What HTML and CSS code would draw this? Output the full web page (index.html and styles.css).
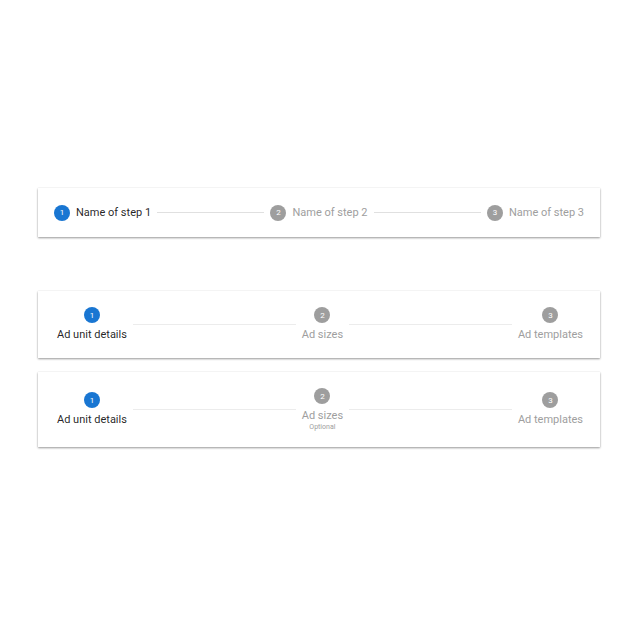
FILE: index.html
```html
<!DOCTYPE html>
<html lang="en">
<head>
  <meta charset="UTF-8">
  <meta name="viewport" content="width=device-width, initial-scale=1.0">
  <title>Steppers</title>
  <link rel="stylesheet" href="styles.css">
</head>
<body>
  <main>
    <div class="stepper horizontal">
      <div class="step active">
        <span class="num">1</span>
        <span class="label">Name of step 1</span>
      </div>
      <div class="line"></div>
      <div class="step">
        <span class="num">2</span>
        <span class="label">Name of step 2</span>
      </div>
      <div class="line"></div>
      <div class="step">
        <span class="num">3</span>
        <span class="label">Name of step 3</span>
      </div>
    </div>

    <div class="stepper stacked first">
      <div class="step active">
        <span class="num">1</span>
        <span class="label">Ad unit details</span>
      </div>
      <div class="line"></div>
      <div class="step">
        <span class="num">2</span>
        <span class="label">Ad sizes</span>
      </div>
      <div class="line"></div>
      <div class="step">
        <span class="num">3</span>
        <span class="label">Ad templates</span>
      </div>
    </div>

    <div class="stepper stacked">
      <div class="step active">
        <span class="num">1</span>
        <span class="label">Ad unit details</span>
      </div>
      <div class="line"></div>
      <div class="step">
        <span class="num">2</span>
        <span class="label">Ad sizes</span>
        <span class="hint">Optional</span>
      </div>
      <div class="line"></div>
      <div class="step">
        <span class="num">3</span>
        <span class="label">Ad templates</span>
      </div>
    </div>
  </main>
</body>
</html>
```

FILE: styles.css
```css
* {
  margin: 0;
  padding: 0;
  box-sizing: border-box;
}
body {
  background: #fff;
  font-family: Roboto, "Liberation Sans", sans-serif;
}
main {
  width: 562px;
  margin-left: 38px;
  padding-top: 188px;
  padding-bottom: 40px;
}
.stepper {
  display: flex;
  align-items: center;
  background: #fff;
  box-shadow: 0 1px 2px rgba(0, 0, 0, 0.4), 0 0 1px rgba(0, 0, 0, 0.1);
}
.line {
  flex: 1;
  height: 1px;
  background: #e0e0e0;
  margin: 0 6px;
}
.step {
  display: flex;
  align-items: center;
  color: #9e9e9e;
  font-size: 11px;
}
.step .num {
  width: 16px;
  height: 16px;
  border-radius: 50%;
  background: #9e9e9e;
  color: #fff;
  font-size: 8px;
  display: flex;
  align-items: center;
  justify-content: center;
}
.step.active {
  color: rgba(0, 0, 0, 0.87);
}
.step.active .num {
  background: #1976d2;
}

/* inline stepper */
.horizontal {
  height: 49px;
  padding: 0 16px;
  margin-bottom: 54px;
}
.horizontal .step {
  gap: 6px;
}

/* label under the circle */
.stacked {
  padding: 16px 17px 16px 19px;
}
.stacked.first {
  margin-bottom: 14px;
}
.stacked .line {
  background: #ececec;
}
.stacked .step {
  flex-direction: column;
  gap: 5px;
}
.stacked .label {
  line-height: 14px;
}
.stacked .hint {
  color: #9e9e9e;
  font-size: 7px;
  line-height: 8px;
  margin-top: -5px;
}
```
